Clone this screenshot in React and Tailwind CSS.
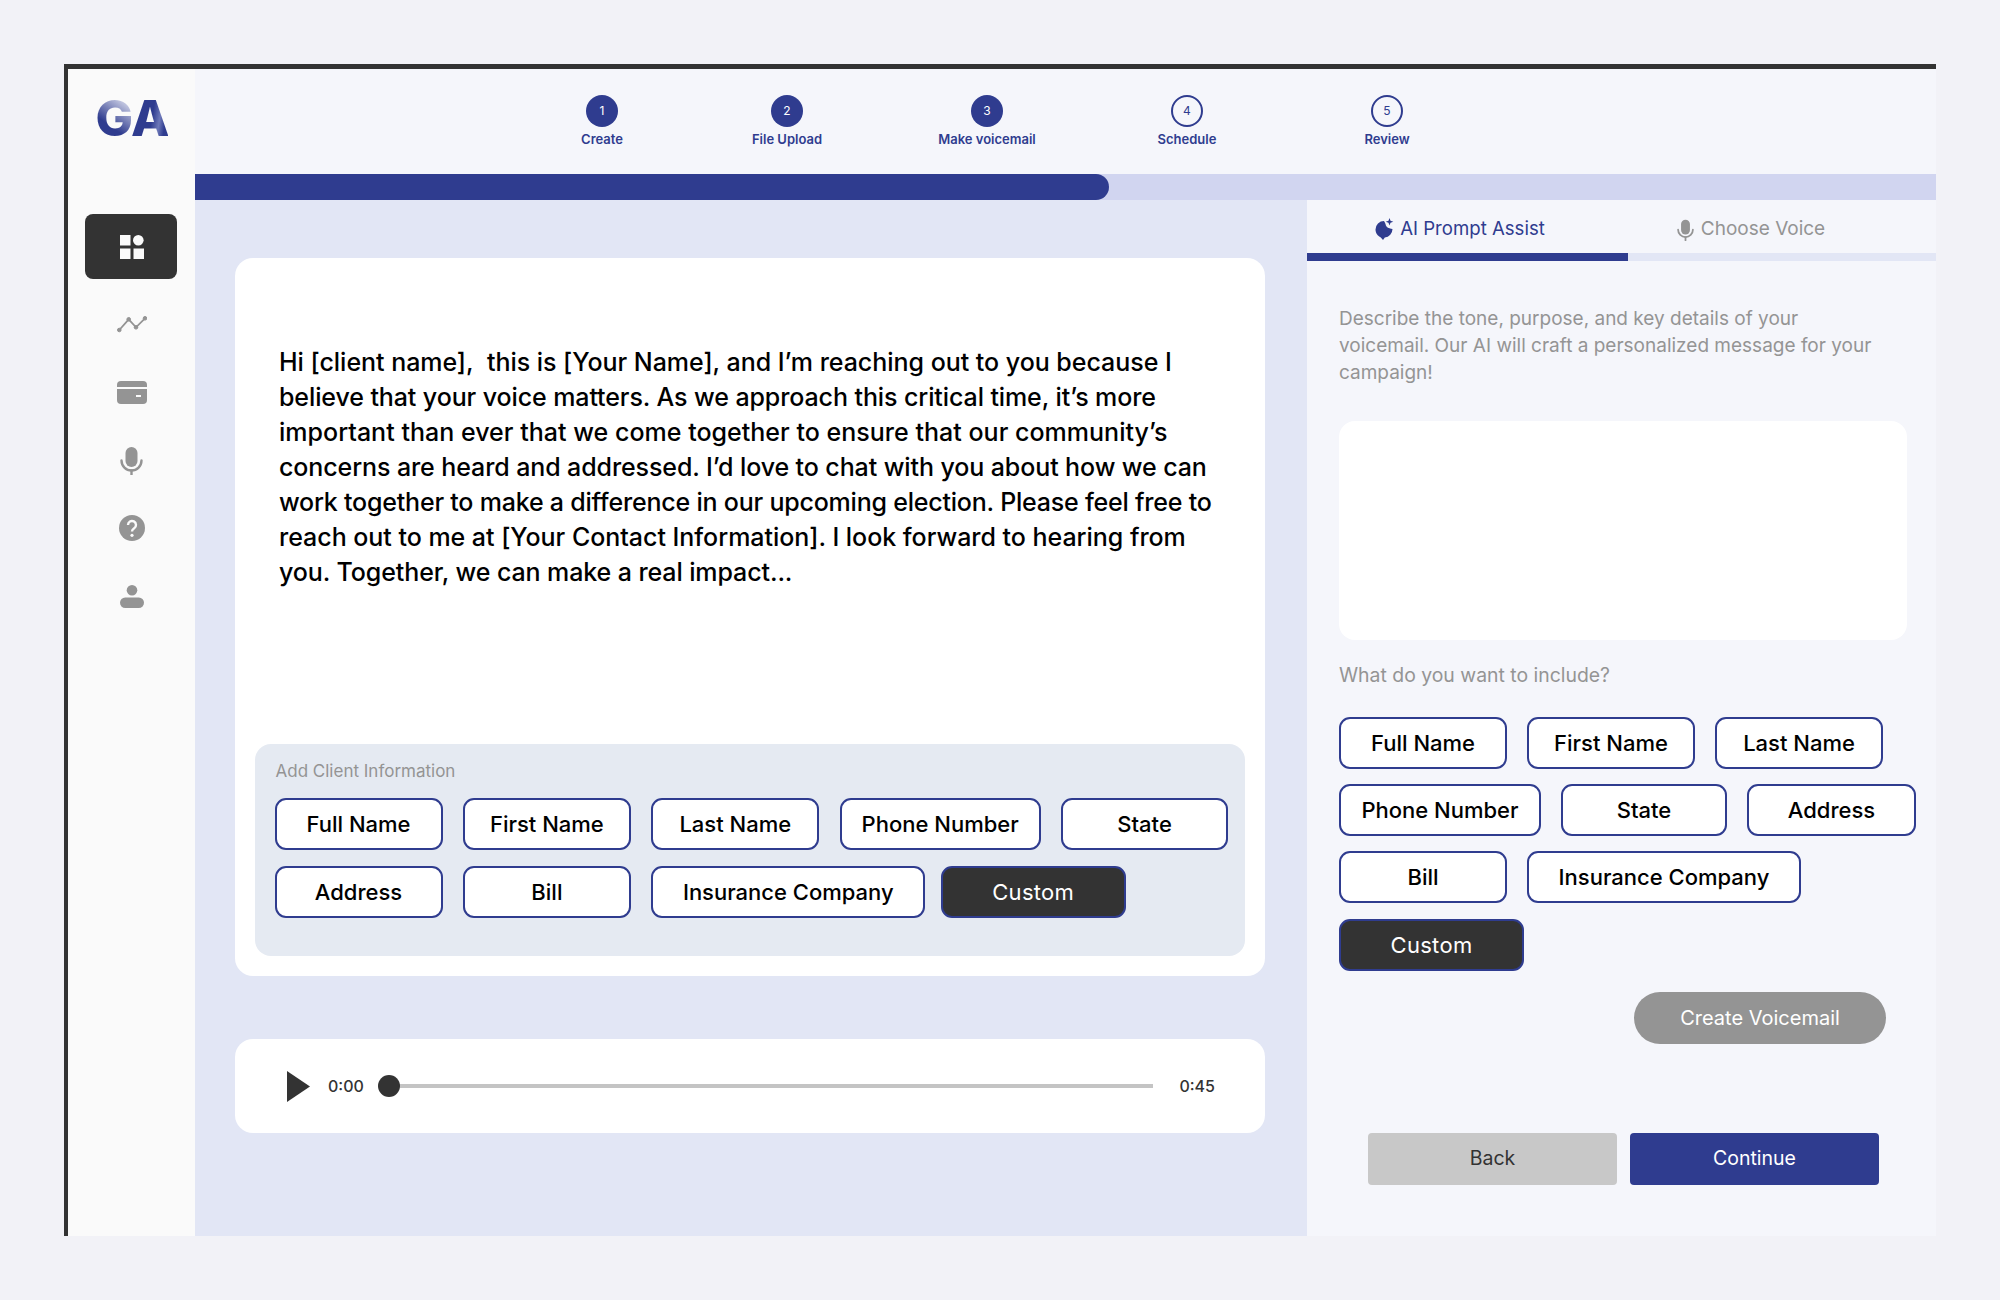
import React from "react";

const Chip = ({ children, className = "", dark = false }) => (
  <div
    className={
      "h-[52px] pt-[1px] flex items-center justify-center rounded-[11px] border-[2.5px] border-[#2f3c8f] text-[22px] " +
      (dark ? "bg-[#333333] text-white font-normal tracking-[0.3px] " : "bg-white text-black font-medium ") +
      className
    }
  >
    {children}
  </div>
);

const Step = ({ n, label, done, className = "" }) => (
  <div className={"w-[200px] flex flex-col items-center " + className}>
    <div
      className={
        "w-[32px] h-[32px] rounded-full flex items-center justify-center text-[12px] " +
        (done ? "bg-[#2f3c8f] text-white" : "border-2 border-[#2f3c8f] text-[#2f3c8f]")
      }
    >
      {n}
    </div>
    <div className="mt-[3px] text-[13px] leading-[18px] font-semibold text-[#2f3c8f]">{label}</div>
  </div>
);

const NavSlot = ({ children }) => (
  <div className="h-[68px] w-full flex items-center justify-center">{children}</div>
);

const MicIcon = ({ w, h, color, className = "" }) => (
  <svg width={w} height={h} viewBox="0 0 23 28" fill="none" className={className}>
    <rect x="5.5" y="0" width="12" height="20" rx="6" fill={color} />
    <path d="M1.5 13.5a10 10 0 0 0 20 0" stroke={color} strokeWidth="2.4" strokeLinecap="round" />
    <path d="M11.5 23.5V28" stroke={color} strokeWidth="2.4" strokeLinecap="round" />
  </svg>
);

export default function App() {
  return (
    <div className="w-[2000px] h-[1300px] bg-[#f2f2f7] p-[64px] font-['Inter',sans-serif]">
      <div className="w-[1872px] h-[1172px] flex border-t-[5px] border-l-[4px] border-[#333333]">
        <aside className="w-[127px] bg-[#fafafa] flex flex-col items-center">
          <div className="h-[145px] w-full flex items-start justify-center pt-[20px]">
            <div className="text-[50px] leading-[58px] font-extrabold tracking-[-2px] flex">
              <span className="bg-[linear-gradient(215deg,#e8eaf5_12%,#2f3c8f_62%)] bg-clip-text text-transparent">G</span>
              <span className="bg-[linear-gradient(100deg,#2f3c8f_55%,#6d78b8_72%,#2f3c8f_85%)] bg-clip-text text-transparent">A</span>
            </div>
          </div>
          <div className="w-[92px] h-[65px] mr-[2px] rounded-[8px] bg-[#333333] flex items-center justify-center pl-[3px]">
            <svg width="24" height="24" viewBox="0 0 24 24" fill="#fafafa">
              <rect x="0" y="0" width="10.5" height="10.5" />
              <circle cx="18.3" cy="5.3" r="5.3" />
              <rect x="0" y="13.5" width="10.5" height="10.5" />
              <rect x="13.5" y="13.5" width="10.5" height="10.5" />
            </svg>
          </div>
          <div className="mt-[11px] w-full flex flex-col">
            <NavSlot>
              <svg width="30" height="18" viewBox="0 0 30 18" fill="#949494" stroke="#949494" className="mt-[2px]">
                <path d="M2.3 14L11.7 3.3L19 11.3L28 2.3" fill="none" strokeWidth="1.8" />
                <circle cx="2.3" cy="14" r="1.8" />
                <circle cx="11.7" cy="3.3" r="1.8" />
                <circle cx="19" cy="11.3" r="1.8" />
                <circle cx="28" cy="2.3" r="1.8" />
              </svg>
            </NavSlot>
            <NavSlot>
              <svg width="30" height="23" viewBox="0 0 30 23" fill="none">
                <rect x="0" y="0" width="30" height="23" rx="4" fill="#949494" />
                <rect x="0" y="6" width="30" height="2" fill="#fafafa" />
                <rect x="19" y="14" width="5" height="2" fill="#fafafa" />
              </svg>
            </NavSlot>
            <NavSlot>
              <MicIcon w={23} h={28} color="#949494" className="mt-[2px]" />
            </NavSlot>
            <NavSlot>
              <svg width="26" height="26" viewBox="0 0 26 26">
                <circle cx="13" cy="13" r="13" fill="#949494" />
                <path d="M9 10a4 4 0 1 1 6.2 3.3c-1.4.9-2.2 1.5-2.2 3.2" fill="none" stroke="#fafafa" strokeWidth="2.4" />
                <circle cx="13" cy="20.3" r="1.6" fill="#fafafa" />
              </svg>
            </NavSlot>
            <NavSlot>
              <svg width="24" height="23" viewBox="0 0 24 23" fill="#949494">
                <circle cx="12" cy="5.3" r="5.3" />
                <rect x="0" y="12.5" width="24" height="10.5" rx="5.2" />
              </svg>
            </NavSlot>
          </div>
        </aside>

        <div className="flex-1 flex flex-col min-w-0">
          <header className="h-[105px] bg-[#f5f6fb] flex pl-[307px] pt-[26px]">
            <Step n="1" label="Create" done className="mr-[-15px]" />
            <Step n="2" label="File Upload" done />
            <Step n="3" label="Make voicemail" done />
            <Step n="4" label="Schedule" />
            <Step n="5" label="Review" />
          </header>
          <div className="h-[26px] bg-[#d1d5f0]">
            <div className="w-[914px] h-full bg-[#2f3c8f] rounded-r-[13px]" />
          </div>

          <div className="flex-1 flex min-h-0">
            <main className="w-[1112px] bg-[#e2e6f5] pl-[40px] pr-[42px] pt-[58px]">
              <section className="h-[718px] bg-white rounded-[18px] p-[20px] flex flex-col">
                <div className="pt-[67px] pl-[24px] text-[25px] leading-[35px] font-[450] text-black whitespace-nowrap">
                  <div className="tracking-[-0.03px]">Hi [client name],&nbsp; this is [Your Name], and I’m reaching out to you because I</div>
                  <div className="tracking-[-0.1px]">believe that your voice matters. As we approach this critical time, it’s more</div>
                  <div className="tracking-[0.02px]">important than ever that we come together to ensure that our community’s</div>
                  <div className="tracking-[-0.1px]">concerns are heard and addressed. I’d love to chat with you about how we can</div>
                  <div className="tracking-[-0.21px]">work together to make a difference in our upcoming election. Please feel free to</div>
                  <div className="tracking-[-0.03px]">reach out to me at [Your Contact Information]. I look forward to hearing from</div>
                  <div className="tracking-[-0.1px]">you. Together, we can make a real impact...</div>
                </div>
                <div className="mt-auto h-[212px] bg-[#e5eaf2] rounded-[16px] pl-[19.5px] pt-[16px]">
                  <div className="pl-[1px] text-[17px] leading-[22px] text-[#949494]">Add Client Information</div>
                  <div className="mt-[16px] flex gap-[20.4px]">
                    <Chip className="w-[168px]">Full Name</Chip>
                    <Chip className="w-[168px]">First Name</Chip>
                    <Chip className="w-[168px]">Last Name</Chip>
                    <Chip className="w-[201px]">Phone Number</Chip>
                    <Chip className="w-[167px]">State</Chip>
                  </div>
                  <div className="mt-[16px] flex gap-[20.4px]">
                    <Chip className="w-[168px]">Address</Chip>
                    <Chip className="w-[168px]">Bill</Chip>
                    <Chip className="w-[274px]">Insurance Company</Chip>
                    <Chip dark className="w-[185px] ml-[-5px]">Custom</Chip>
                  </div>
                </div>
              </section>

              <section className="mt-[63px] h-[94px] bg-white rounded-[18px] flex items-center pl-[52px] pr-[50px]">
                <svg width="23" height="31" viewBox="0 0 23 31" fill="#333333">
                  <path d="M0 0L23 15.5L0 31Z" />
                </svg>
                <span className="ml-[18px] w-[36px] text-[16px] font-medium text-[#333333]">0:00</span>
                <div className="ml-[14px] flex-1 flex items-center">
                  <div className="w-[22px] h-[22px] rounded-full bg-[#333333] shrink-0" />
                  <div className="flex-1 h-[4px] bg-[#c4c4c4]" />
                </div>
                <span className="ml-[26px] text-[16px] font-medium text-[#333333]">0:45</span>
              </section>
            </main>

            <div className="flex-1 bg-[#f5f6fb] flex flex-col min-w-0">
              <div className="h-[61px] flex flex-col">
                <div className="flex-1 flex">
                  <div className="w-[321px] flex items-center justify-center gap-[6px] pt-[4px] pr-[16px] text-[18.6px] text-[#2f3c8f]">
                    <svg width="20" height="22" viewBox="0 0 20 22" fill="#2f3c8f">
                      <path d="M10 3a8.5 8.5 0 0 0-8.5 8.5c0 3.5 2.2 6.6 5.3 7.9L9 22l1.8-2.6A8.5 8.5 0 0 0 18.5 11c-1-.2-2-.2-3-.7A5 5 0 0 1 11.5 6c-.4-1-.8-2-1.5-3Z" />
                      <path d="M15.5 0l1 2.8 2.8 1-2.8 1-1 2.8-1-2.8-2.8-1 2.8-1Z" />
                    </svg>
                    AI Prompt Assist
                  </div>
                  <div className="flex-1 flex items-center justify-center gap-[7px] pt-[6px] pr-[62px] text-[19px] text-[#949494]">
                    <MicIcon w={17} h={22} color="#949494" />
                    Choose Voice
                  </div>
                </div>
                <div className="h-[8px] bg-[#e2e6f5]">
                  <div className="w-[321px] h-full bg-[#2f3c8f]" />
                </div>
              </div>

              <div className="pl-[32px] flex flex-col">
                <p className="mt-[44px] text-[19px] leading-[27px] text-[#949494] whitespace-nowrap">
                  Describe the tone, purpose, and key details of your<br />
                  voicemail. Our AI will craft a personalized message for your<br />
                  campaign!
                </p>
                <div className="mt-[35px] w-[568px] h-[219px] bg-white rounded-[16px]" />
                <div className="mt-[22px] text-[19.4px] leading-[27px] text-[#949494]">What do you want to include?</div>
                <div className="mt-[28px] flex flex-col gap-[15.2px]">
                  <div className="flex gap-[20px]">
                    <Chip className="w-[168px]">Full Name</Chip>
                    <Chip className="w-[168px]">First Name</Chip>
                    <Chip className="w-[168px]">Last Name</Chip>
                  </div>
                  <div className="flex gap-[20px]">
                    <Chip className="w-[202px]">Phone Number</Chip>
                    <Chip className="w-[166px]">State</Chip>
                    <Chip className="w-[169px]">Address</Chip>
                  </div>
                  <div className="flex gap-[20px]">
                    <Chip className="w-[168px]">Bill</Chip>
                    <Chip className="w-[274px]">Insurance Company</Chip>
                  </div>
                  <div className="flex">
                    <Chip dark className="w-[185px]">Custom</Chip>
                  </div>
                </div>
                <div className="mt-[21px] flex justify-end pr-[50px]">
                  <div className="w-[252px] h-[52px] rounded-full bg-[#949494] text-white text-[20px] flex items-center justify-center">Create Voicemail</div>
                </div>
                <div className="mt-[89px] flex gap-[13px] pl-[29px]">
                  <div className="w-[249px] h-[52px] rounded-[4px] bg-[#c8c8c8] text-[#333333] text-[19.5px] flex items-center justify-center">Back</div>
                  <div className="w-[249px] h-[52px] rounded-[4px] bg-[#2f3c8f] text-white text-[19.5px] flex items-center justify-center">Continue</div>
                </div>
              </div>
            </div>
          </div>
        </div>
      </div>
    </div>
  );
}
